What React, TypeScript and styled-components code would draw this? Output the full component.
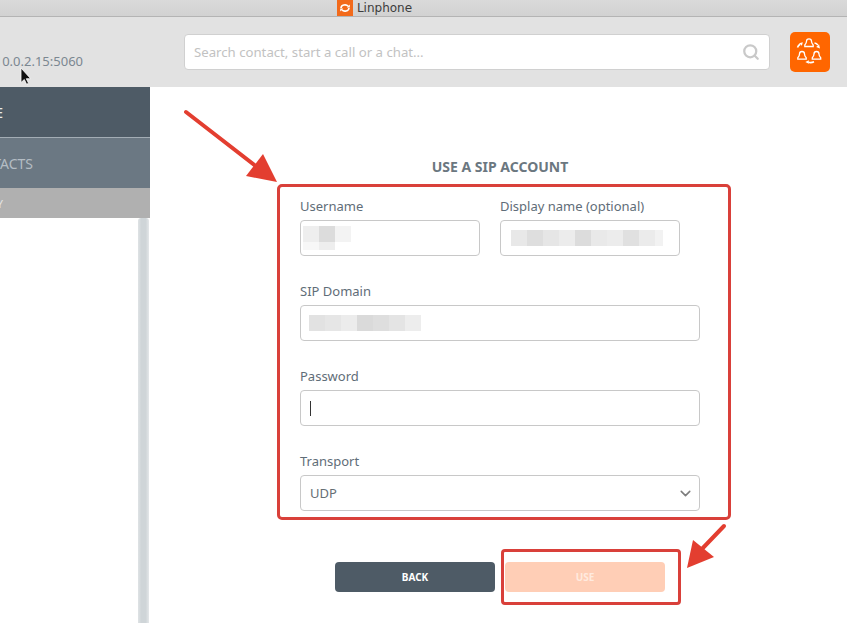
import React from "react";
import styled, { createGlobalStyle } from "styled-components";
import { ChevronDown, Search } from "lucide-react";

const Global = createGlobalStyle`
  html, body { margin: 0; padding: 0; width: 847px; height: 623px; overflow: hidden; background: #fff; }
  #root { width: 847px; height: 623px; }
`;

const Page = styled.div`
  position: relative;
  width: 847px;
  height: 623px;
  overflow: hidden;
  display: flex;
  flex-direction: column;
  font-family: "Noto Sans", "Open Sans", sans-serif;
`;

const TitleBar = styled.div`
  height: 16px;
  flex: none;
  border-bottom: 1px solid #b4b4b4;
  background: linear-gradient(#dadada, #d2d2d2);
  display: flex;
  align-items: center;
  justify-content: center;
  gap: 4px;
  padding-right: 98px;
  font-family: "DejaVu Sans", sans-serif;
  font-size: 12px;
  color: #3c3c3c;
`;

const AppLogo = styled.svg`
  width: 16px;
  height: 16px;
  display: block;
`;

const Header = styled.header`
  height: 70px;
  flex: none;
  background: #e2e2e2;
  display: flex;
  align-items: flex-start;
`;

const Address = styled.div`
  width: 83px;
  flex: none;
  margin-top: 36px;
  display: flex;
  justify-content: flex-end;
  white-space: nowrap;
  font-size: 13px;
  line-height: 17px;
  color: #7b8791;
`;

const SearchBox = styled.div`
  width: 586px;
  height: 36px;
  box-sizing: border-box;
  margin: 17px 0 0 101px;
  padding: 0 9px 0 9px;
  background: #fff;
  border: 1px solid #d0d0d0;
  border-radius: 4px;
  display: flex;
  align-items: center;
  justify-content: space-between;
  font-size: 13.2px;
  color: #c2c2c2;
`;

const GroupButton = styled.div`
  width: 40px;
  height: 40px;
  margin: 15px 0 0 20px;
  background: #ff6600;
  border-radius: 5px;
  display: flex;
  align-items: center;
  justify-content: center;
`;

const Body = styled.div`
  flex: 1;
  min-height: 0;
  display: flex;
`;

const Sidebar = styled.aside`
  width: 150px;
  flex: none;
  display: flex;
  flex-direction: column;
  overflow: hidden;
`;

const NavItem = styled.div<{ $bg: string; $h: number; $right: number; $color: string; $size: number }>`
  height: ${p => p.$h}px;
  flex: none;
  box-sizing: border-box;
  background: ${p => p.$bg};
  color: ${p => p.$color};
  padding-right: ${p => p.$right}px;
  font-size: ${p => p.$size}px;
  display: flex;
  align-items: center;
  justify-content: flex-end;
  white-space: nowrap;
`;

const NavDivider = styled.div`
  height: 1px;
  flex: none;
  background: #a3adb5;
`;

const ListArea = styled.div`
  flex: 1;
  background: #fff;
  display: flex;
  justify-content: flex-end;
`;

const ScrollBar = styled.div`
  width: 12px;
  background: #fff;
  display: flex;
  justify-content: flex-start;
`;

const ScrollThumb = styled.div`
  width: 11px;
  height: 100%;
  background: linear-gradient(90deg, #dfe3e5, #cfd5d8 30%, #cfd5d8 70%, #e4e7e9);
  border-radius: 3px 3px 0 0;
`;

const Main = styled.main`
  flex: 1;
  background: #fff;
  display: flex;
  flex-direction: column;
  padding: 70px 0 0 127px;
  box-sizing: border-box;
`;

const Title = styled.h1`
  margin: 0 0 7px;
  width: 446px;
  text-align: center;
  font-size: 14px;
  line-height: 20px;
  font-weight: 700;
  color: #6b7780;
`;

const FormBox = styled.form`
  width: 454px;
  height: 336px;
  box-sizing: border-box;
  border: 3px solid #d9403a;
  border-radius: 5px;
  margin: 0;
  padding: 9px 0 0 20px;
  display: flex;
  flex-direction: column;
  gap: 25px;
`;

const Row = styled.div`
  display: flex;
  gap: 20px;
`;

const Field = styled.div<{ $w: number }>`
  width: ${p => p.$w}px;
  display: flex;
  flex-direction: column;
  gap: 4px;
`;

const Label = styled.label`
  font-size: 13px;
  line-height: 20px;
  color: #5f6d78;
`;

const InputBox = styled.div`
  height: 36px;
  box-sizing: border-box;
  border: 1px solid #c8c8c8;
  border-radius: 4px;
  background: #fff;
  display: flex;
  align-items: center;
  padding-left: 9px;
`;

const SelectBox = styled(InputBox)`
  justify-content: space-between;
  padding: 0 5px 0 9px;
  font-size: 13px;
  color: #666e74;
`;

const Caret = styled.div`
  width: 1px;
  height: 15px;
  background: #333;
`;

const BlurRow = styled.div<{ $offset?: number }>`
  display: flex;
  margin-left: ${p => p.$offset || 0}px;
`;

const BlurStack = styled.div`
  display: flex;
  flex-direction: column;
  margin-left: -7px;
`;

const BlurCell = styled.div<{ $shade: string; $w?: number; $h?: number }>`
  width: ${p => p.$w || 16}px;
  height: ${p => p.$h || 16}px;
  background: ${p => p.$shade};
`;

const Actions = styled.div`
  display: flex;
  align-items: center;
  margin: 29px 0 0 58px;
`;

const ActionButton = styled.button<{ $bg: string; $fg: string }>`
  width: 160px;
  height: 30px;
  border: 0;
  padding: 0;
  border-radius: 4px;
  background: ${p => p.$bg};
  color: ${p => p.$fg};
  font-family: inherit;
  font-size: 10px;
  font-weight: 700;
`;

const Highlight = styled.div`
  width: 180px;
  height: 56px;
  box-sizing: border-box;
  margin-left: 6px;
  border: 3px solid #d9403a;
  border-radius: 4px;
  padding-left: 1px;
  display: flex;
  align-items: center;
`;

const Overlay = styled.svg`
  position: absolute;
  left: 0;
  top: 0;
  pointer-events: none;
`;

const blur = (shades: string[], w = 16, h = 16) =>
  shades.map((s, i) => <BlurCell key={i} $shade={s} $w={w} $h={h} />);

const person = (cx: number, cy: number) =>
  `M${cx - 2.5} ${cy - 1.5}a2.500 2.500 0 0 1 5 0c0 1.700.7 2.700 1.700 3.700v1.500h-8.400v-1.500c1-1 1.700-2 1.700-3.700z`;

export default function App() {
  return (
    <Page>
      <Global />
      <TitleBar>
        <AppLogo viewBox="0 0 16 16">
          <rect width="16" height="16" fill="#f26a1b" />
          <path d="M4 8a4 3.200 0 0 1 7.200-1.800" fill="none" stroke="#fff" strokeWidth="1.600" />
          <path d="M12 8a4 3.200 0 0 1-7.200 1.800" fill="none" stroke="#fff" strokeWidth="1.600" />
          <path d="M12.800 4.400v3h-3zM3.200 11.600v-3h3z" fill="#fff" />
        </AppLogo>
        Linphone
      </TitleBar>
      <Header>
        <Address>10.0.2.15:5060</Address>
        <SearchBox>
          Search contact, start a call or a chat...
          <Search size={18} color="#c9c9c9" strokeWidth={3} />
        </SearchBox>
        <GroupButton>
          <svg width="40" height="40" viewBox="0 0 40 40" fill="none" stroke="#fff" strokeWidth="1.300">
            <path d={person(19, 10.8)} />
            <path d={person(12, 23.5)} />
            <path d={person(26.5, 23.5)} />
            <path d="M7.500 15.500c.5-1.500 1.300-2.500 2.600-3.300" strokeWidth="1.600" />
            <path d="M12.800 10.300l-.9 3.500-2.800-2.600z" fill="#fff" stroke="none" />
            <path d="M24.500 11c1.500.2 2.600.9 3.400 2.100" strokeWidth="1.600" />
            <path d="M30 16.500l-3.800-1.400 2.900-2.500z" fill="#fff" stroke="none" />
            <path d="M24 29.800c-1.800.8-3.700 1-5.500.5" strokeWidth="1.600" />
            <path d="M15.300 30l3.500-1.700v3.500z" fill="#fff" stroke="none" />
          </svg>
        </GroupButton>
      </Header>
      <Body>
        <Sidebar>
          <NavItem $bg="#4e5b66" $h={50} $right={147} $color="#e8ebed" $size={14}>HOME</NavItem>
          <NavDivider />
          <NavItem $bg="#6b7883" $h={50} $right={117} $color="#b4bdc4" $size={14}>CONTACTS</NavItem>
          <NavItem $bg="#b0b0b0" $h={30} $right={147} $color="#e4e4e4" $size={11}>HISTORY</NavItem>
          <ListArea>
            <ScrollBar><ScrollThumb /></ScrollBar>
          </ListArea>
        </Sidebar>
        <Main>
          <Title>USE A SIP ACCOUNT</Title>
          <FormBox>
            <Row>
              <Field $w={180}>
                <Label>Username</Label>
                <InputBox>
                  <BlurStack>
                    <BlurRow>{blur(["#eeeeee", "#dcdcdc", "#f3f3f3"])}</BlurRow>
                    <BlurRow>{blur(["#f7f7f7", "#eeeeee"], 16, 8)}</BlurRow>
                  </BlurStack>
                </InputBox>
              </Field>
              <Field $w={180}>
                <Label>Display name (optional)</Label>
                <InputBox>
                  <BlurRow $offset={1}>
                    {blur(["#e8e8e8", "#dedede", "#e6e6e6", "#ececec", "#dcdcdc", "#e9e9e9", "#ececec", "#e0e0e0", "#ebebeb"])}
                    <BlurCell $shade="#f2f2f2" $w={8} />
                  </BlurRow>
                </InputBox>
              </Field>
            </Row>
            <Field $w={400}>
              <Label>SIP Domain</Label>
              <InputBox>
                <BlurRow $offset={-1}>{blur(["#e2e2e2", "#e6e6e6", "#ececec", "#dadada", "#dedede", "#e4e4e4", "#ededed"])}</BlurRow>
              </InputBox>
            </Field>
            <Field $w={400}>
              <Label>Password</Label>
              <InputBox><Caret /></InputBox>
            </Field>
            <Field $w={400}>
              <Label>Transport</Label>
              <SelectBox>
                UDP
                <ChevronDown size={17} color="#7d7d7d" strokeWidth={2.2} />
              </SelectBox>
            </Field>
          </FormBox>
          <Actions>
            <ActionButton $bg="#4e5b66" $fg="#fff">BACK</ActionButton>
            <Highlight>
              <ActionButton $bg="#ffceb6" $fg="#ffeadf">USE</ActionButton>
            </Highlight>
          </Actions>
        </Main>
      </Body>
      <Overlay width="847" height="623" viewBox="0 0 847 623">
        <path d="M186 112L262 171" stroke="#e33e30" strokeWidth="4" strokeLinecap="round" />
        <path d="M277 182L246 176L263 154Z" fill="#e33e30" />
        <path d="M724 526L700 551" stroke="#e33e30" strokeWidth="4" strokeLinecap="round" />
        <path d="M687 568L714 557L693 540Z" fill="#e33e30" />
        <path d="M21 68v14.500l3.300-3 2.300 4.800 2-1-2.300-4.600h4.400z" fill="#111" stroke="#fff" strokeWidth="0.800" />
      </Overlay>
    </Page>
  );
}
